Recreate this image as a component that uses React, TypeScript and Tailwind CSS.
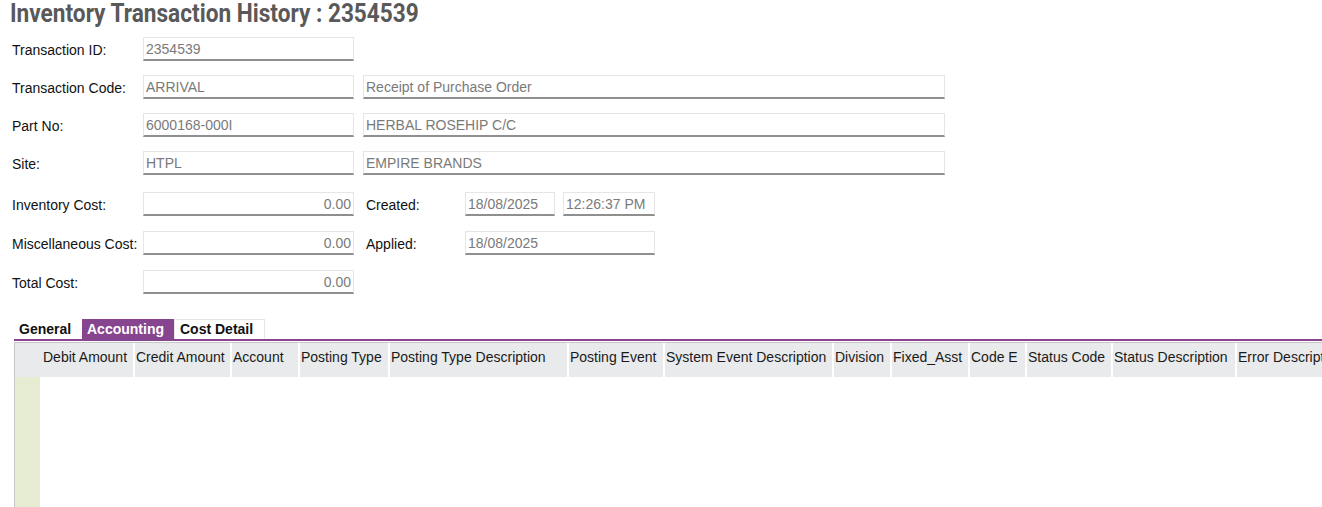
import React from 'react';

const columns: { label: string; width: number }[] = [
  { label: 'Debit Amount', width: 93 },
  { label: 'Credit Amount', width: 97 },
  { label: 'Account', width: 68 },
  { label: 'Posting Type', width: 90 },
  { label: 'Posting Type Description', width: 179 },
  { label: 'Posting Event', width: 96 },
  { label: 'System Event Description', width: 169 },
  { label: 'Division', width: 58 },
  { label: 'Fixed_Asst', width: 78 },
  { label: 'Code E', width: 57 },
  { label: 'Status Code', width: 86 },
  { label: 'Status Description', width: 124 },
  { label: 'Error Description', width: 140 },
];

function Field({
  value,
  className,
  right,
}: {
  value: string;
  className: string;
  right?: boolean;
}) {
  return (
    <div
      className={`flex h-[24px] items-center overflow-hidden whitespace-nowrap border border-[#e6e6e6] border-b-2 border-b-[#8f8f8f] bg-white px-[2px] pt-[2px] text-[14px] text-[#7a7a7a] ${
        right ? 'justify-end' : ''
      } ${className}`}
    >
      {value}
    </div>
  );
}

function Label({ text, className = 'w-[131px]' }: { text: string; className?: string }) {
  return (
    <div className={`shrink-0 whitespace-nowrap pt-[2px] text-[14px] text-[#111] ${className}`}>
      {text}
    </div>
  );
}

export default function App() {
  return (
    <div
      className="h-[507px] w-[1322px] overflow-hidden bg-white"
      style={{ fontFamily: '"Liberation Sans", Arial, sans-serif' }}
    >
      <div className="h-[30px] w-[600px] pl-[10px]">
        <h1
          className="inline-block origin-left scale-x-[0.87] text-[26px] font-bold leading-[26px] whitespace-nowrap text-[#595959]"
          style={{ fontFamily: 'Roboto, sans-serif' }}
        >
          Inventory Transaction History : 2354539
        </h1>
      </div>

      <div className="flex flex-col pl-[12px]">
        <div className="mt-[7px] flex items-center">
          <Label text="Transaction ID:" />
          <Field value="2354539" className="w-[211px]" />
        </div>
        <div className="mt-[14px] flex items-center">
          <Label text="Transaction Code:" />
          <Field value="ARRIVAL" className="w-[211px]" />
          <Field value="Receipt of Purchase Order" className="ml-[9px] w-[582px]" />
        </div>
        <div className="mt-[14px] flex items-center">
          <Label text="Part No:" />
          <Field value="6000168-000I" className="w-[211px]" />
          <Field value="HERBAL ROSEHIP C/C" className="ml-[9px] w-[582px]" />
        </div>
        <div className="mt-[14px] flex items-center">
          <Label text="Site:" />
          <Field value="HTPL" className="w-[211px]" />
          <Field value="EMPIRE BRANDS" className="ml-[9px] w-[582px]" />
        </div>
        <div className="mt-[17px] flex items-center">
          <Label text="Inventory Cost:" />
          <Field value="0.00" right className="w-[211px]" />
          <Label text="Created:" className="ml-[12px] w-[99px]" />
          <Field value="18/08/2025" className="w-[90px]" />
          <Field value="12:26:37 PM" className="ml-[8px] w-[92px]" />
        </div>
        <div className="mt-[15px] flex items-center">
          <Label text="Miscellaneous Cost:" />
          <Field value="0.00" right className="w-[211px]" />
          <Label text="Applied:" className="ml-[12px] w-[99px]" />
          <Field value="18/08/2025" className="w-[190px]" />
        </div>
        <div className="mt-[15px] flex items-center">
          <Label text="Total Cost:" />
          <Field value="0.00" right className="w-[211px]" />
        </div>
      </div>

      <div className="mt-[25px] pl-[14px]">
        <div className="flex h-[20px] pl-[1px] text-[14px] font-bold">
          <div className="flex w-[67px] items-center bg-white pl-[4px] text-[#111]">General</div>
          <div className="flex w-[92px] items-center bg-[#86458e] pl-[5px] text-white">Accounting</div>
          <div className="flex w-[91px] items-center border border-b-0 border-[#e6e6e6] bg-white pl-[5px] text-[#111]">
            Cost Detail
          </div>
        </div>
        <div className="h-[2px] bg-[#86458e]" />
        <div className="mt-[1px] border-t border-l border-[#c8c8c8]">
          <div className="flex h-[34px] bg-[#e9eaeb] text-[14px] text-[#1a1a1a]">
            <div className="w-[25px] shrink-0" />
            {columns.map((c, i) => (
              <div
                key={c.label}
                className={`flex shrink-0 items-center overflow-hidden whitespace-nowrap pb-[5px] ${
                  i > 0 ? 'border-l-2 border-white pl-[1px]' : 'pl-[3px]'
                }`}
                style={{ width: c.width }}
              >
                {c.label}
              </div>
            ))}
          </div>
          <div className="flex h-[140px]">
            <div className="w-[25px] shrink-0 bg-[#e5ecd1]" />
            <div className="flex-1 bg-white" />
          </div>
        </div>
      </div>
    </div>
  );
}
